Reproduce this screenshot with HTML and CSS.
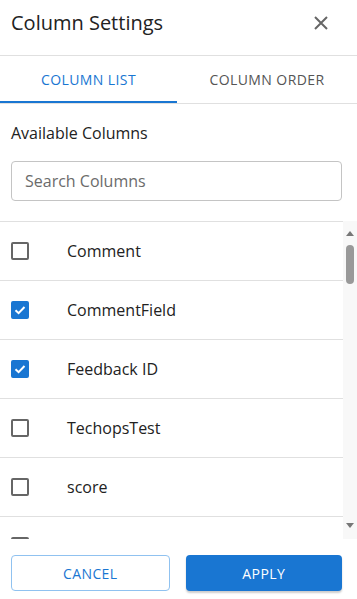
FILE: index.html
```html
<!DOCTYPE html>
<html lang="en">
  <head>
    <meta charset="UTF-8" />
    <meta name="viewport" content="width=device-width, initial-scale=1.0" />
    <title>Column Settings</title>
    <link rel="stylesheet" href="styles.css">
  </head>
  <body>
    <div class="panel">
      <div class="panel-header">
        <h2 class="panel-title">Column Settings</h2>
        <button class="close-btn" aria-label="Close">
          <svg width="14" height="14" viewBox="0 0 14 14">
            <path d="M1 1L13 13M13 1L1 13" stroke="#666" stroke-width="2" fill="none" />
          </svg>
        </button>
      </div>

      <div class="tabs">
        <div class="tab active">Column List</div>
        <div class="tab">Column Order</div>
      </div>

      <div class="section">
        <div class="section-label">Available Columns</div>
        <input class="search" type="text" placeholder="Search Columns" />
      </div>

      <div class="list-wrap">
        <div class="list">
          <div class="row">
            <span class="checkbox"></span>
            <span class="row-label">Comment</span>
          </div>
          <div class="row">
            <span class="checkbox checked">
              <svg width="14" height="14" viewBox="0 0 14 14"><path d="M2.5 7.2L5.6 10.2L11.5 4" stroke="#fff" stroke-width="2" fill="none" /></svg>
            </span>
            <span class="row-label">CommentField</span>
          </div>
          <div class="row">
            <span class="checkbox checked">
              <svg width="14" height="14" viewBox="0 0 14 14"><path d="M2.5 7.2L5.6 10.2L11.5 4" stroke="#fff" stroke-width="2" fill="none" /></svg>
            </span>
            <span class="row-label">Feedback ID</span>
          </div>
          <div class="row">
            <span class="checkbox"></span>
            <span class="row-label">TechopsTest</span>
          </div>
          <div class="row">
            <span class="checkbox"></span>
            <span class="row-label">score</span>
          </div>
          <div class="row">
            <span class="checkbox"></span>
          </div>
        </div>
        <div class="scrollbar">
          <span class="arrow up"></span>
          <span class="thumb"></span>
          <span class="track-space"></span>
          <span class="arrow down"></span>
        </div>
      </div>

      <div class="actions">
        <button class="btn btn-outline">Cancel</button>
        <button class="btn btn-primary">Apply</button>
      </div>
    </div>
  </body>
</html>
```

FILE: styles.css
```css
body {
  margin: 0;
  font-family: "Open Sans", "Noto Sans", sans-serif;
  color: #222;
  background: white;
}

.panel {
  width: 357px;
  height: 599px;
  display: flex;
  flex-direction: column;
}

.panel-header {
  height: 45px;
  padding: 0 29px 10px 11px;
  display: flex;
  justify-content: space-between;
  align-items: center;
  border-bottom: 1px solid #e0e0e0;
}

.panel-title {
  margin: 0;
  font-size: 20px;
  font-weight: 400;
  color: #222;
}

.close-btn {
  border: none;
  background: none;
  padding: 0;
  width: 14px;
  height: 14px;
  display: flex;
  cursor: pointer;
}

.tabs {
  display: flex;
  height: 47px;
  border-bottom: 1px solid #e0e0e0;
}

.tab {
  flex: 1;
  display: flex;
  justify-content: center;
  align-items: center;
  font-size: 14px;
  text-transform: uppercase;
  letter-spacing: 0.4px;
  color: #555;
}

.tab.active {
  flex: 0 0 177px;
  color: #1976d2;
  box-shadow: inset 0 -2px 0 #1976d2;
}

.section {
  padding: 17px 15px 20px 11px;
}

.section-label {
  font-size: 16px;
  line-height: 24px;
  margin-bottom: 16px;
}

.search {
  box-sizing: border-box;
  width: 100%;
  height: 40px;
  padding: 0 13px;
  border: 1px solid #c4c4c4;
  border-radius: 4px;
  font-family: inherit;
  font-size: 16px;
  color: #222;
}

.search::placeholder {
  color: #6b6b6b;
}

.list-wrap {
  display: flex;
  height: 317px;
  border-top: 1px solid #e0e0e0;
}

.list {
  flex: 1;
  overflow: hidden;
}

.row {
  height: 58px;
  display: flex;
  align-items: center;
  padding-left: 11px;
  border-bottom: 1px solid #e0e0e0;
}

.checkbox {
  box-sizing: border-box;
  width: 18px;
  height: 18px;
  border: 2px solid #666;
  border-radius: 2px;
  margin-right: 38px;
  display: flex;
  justify-content: center;
  align-items: center;
}

.checkbox.checked {
  background: #1976d2;
  border-color: #1976d2;
}

.row-label {
  font-size: 16px;
  color: #222;
}

.scrollbar {
  width: 14px;
  margin-top: -1px;
  height: 318px;
  background: #f8f8f8;
  display: flex;
  flex-direction: column;
  align-items: center;
  padding-bottom: 2px;
  box-sizing: border-box;
}

.arrow {
  width: 0;
  height: 0;
  border-left: 4px solid transparent;
  border-right: 4px solid transparent;
}

.arrow.up {
  margin-top: 10px;
  border-bottom: 5px solid #777;
}

.arrow.down {
  margin-bottom: 9px;
  border-top: 5px solid #777;
}

.thumb {
  width: 8px;
  height: 39px;
  margin-top: 9px;
  border-radius: 4px;
  background: #999;
}

.track-space {
  flex: 1;
}

.actions {
  display: flex;
  gap: 16px;
  padding: 16px 15px 0 11px;
}

.btn {
  flex: 1;
  height: 36px;
  border-radius: 4px;
  font-family: inherit;
  font-size: 14px;
  text-transform: uppercase;
  letter-spacing: 0.4px;
  cursor: pointer;
}

.btn-outline {
  background: white;
  color: #1976d2;
  border: 1px solid #90c2f0;
}

.btn-primary {
  background: #1976d2;
  color: white;
  border: none;
  box-shadow: 0 2px 2px rgba(0, 0, 0, 0.2);
}
```
